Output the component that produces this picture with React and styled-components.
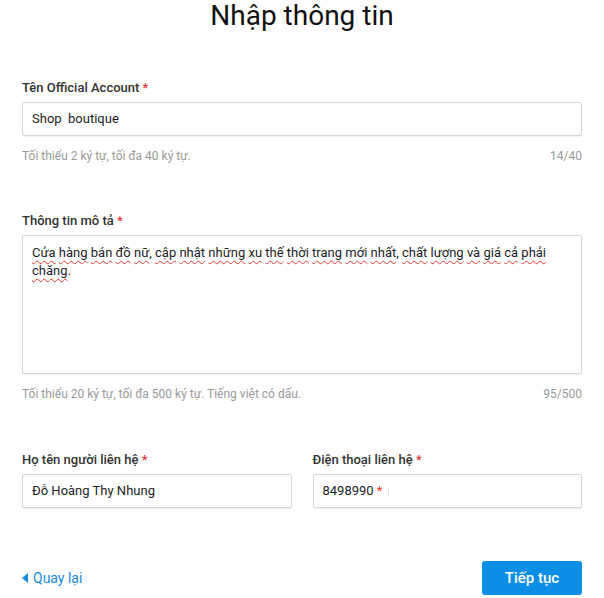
import React from 'react';
import styled, { createGlobalStyle } from 'styled-components';

const GlobalStyle = createGlobalStyle`
  body {
    margin: 0;
    background: #fff;
    font-family: Roboto, "Noto Sans", Arial, sans-serif;
    color: #222;
  }
`;

const Page = styled.div`
  width: 604px;
  padding: 0 22px;
  box-sizing: border-box;
`;

const Title = styled.h1`
  margin: 0;
  font-size: 28px;
  font-weight: 400;
  line-height: 32px;
  text-align: center;
  color: #111;
`;

const Section = styled.div`
  margin-top: ${(p) => p.top}px;
`;

const Label = styled.div`
  font-size: 13px;
  font-weight: 500;
  line-height: 16px;
  color: #333;
  margin-bottom: 6px;

  span {
    color: #e53935;
  }
`;

const Box = styled.div`
  box-sizing: border-box;
  height: ${(p) => p.height || 34}px;
  border: 1px solid #d6d6d6;
  border-radius: 2px;
  box-shadow: 0 1px 1px rgba(0, 0, 0, 0.06);
  padding: ${(p) => (p.multi ? '8px 9px' : '0 9px')};
  display: ${(p) => (p.multi ? 'block' : 'flex')};
  align-items: center;
  font-size: 13px;
  line-height: 18px;
  color: #1e1e1e;
`;

const Hint = styled.div`
  display: flex;
  justify-content: space-between;
  margin-top: 12px;
  font-size: 12px;
  line-height: 16px;
  color: #9a9a9a;
`;

const Row = styled.div`
  display: grid;
  grid-template-columns: 1fr 1fr;
  column-gap: 21px;
`;

const Typo = styled.span`
  text-decoration: underline wavy #e53935;
  text-decoration-thickness: 1px;
  text-underline-offset: 3px;
`;

const Star = styled.span`
  color: #e53935;
  margin-left: 3px;
`;

const Caret = styled.span`
  display: inline-block;
  width: 1px;
  height: 9px;
  background: #e2e2e2;
  margin-left: 6px;
`;

const Footer = styled.div`
  display: flex;
  justify-content: space-between;
  align-items: center;
  margin-top: 53px;
`;

const Back = styled.a`
  display: flex;
  align-items: center;
  gap: 5px;
  font-size: 14px;
  color: #1a8ae0;
  text-decoration: none;
  cursor: pointer;
`;

const Arrow = styled.span`
  width: 0;
  height: 0;
  border-top: 5px solid transparent;
  border-bottom: 5px solid transparent;
  border-right: 6px solid #1a8ae0;
`;

const Button = styled.button`
  width: 100px;
  height: 34px;
  border: none;
  border-radius: 3px;
  background: #0a8ee6;
  color: #fff;
  font-family: inherit;
  font-size: 15px;
  font-weight: 500;
  cursor: pointer;
`;

const desc =
  'Cửa hàng bán đồ nữ, cập nhật những xu thế thời trang mới nhất, chất lượng và giá cả phải chăng.';

const Described = () => (
  <>
    {desc.split(' ').map((w, i) => {
      const m = w.match(/^(.*?)([,.]?)$/);
      return (
        <React.Fragment key={i}>
          {i > 0 && ' '}
          <Typo>{m[1]}</Typo>
          {m[2]}
        </React.Fragment>
      );
    })}
  </>
);

const App = () => (
  <Page>
    <GlobalStyle />
    <Title>Nhập thông tin</Title>

    <Section top={48}>
      <Label>
        Tên Official Account <span>*</span>
      </Label>
      <Box>Shop&nbsp; boutique</Box>
      <Hint>
        <span>Tối thiểu 2 ký tự, tối đa 40 ký tự.</span>
        <span>14/40</span>
      </Hint>
    </Section>

    <Section top={49}>
      <Label>
        Thông tin mô tả <span>*</span>
      </Label>
      <Box multi height={139}>
        <Described />
      </Box>
      <Hint>
        <span>Tối thiểu 20 ký tự, tối đa 500 ký tự. Tiếng việt có dấu.</span>
        <span>95/500</span>
      </Hint>
    </Section>

    <Section top={50}>
      <Row>
        <div>
          <Label>
            Họ tên người liên hệ <span>*</span>
          </Label>
          <Box>Đỗ Hoàng Thy Nhung</Box>
        </div>
        <div>
          <Label>
            Điện thoại liên hệ <span>*</span>
          </Label>
          <Box>
            8498990<Star>*</Star>
            <Caret />
          </Box>
        </div>
      </Row>
    </Section>

    <Footer>
      <Back>
        <Arrow />
        Quay lại
      </Back>
      <Button>Tiếp tục</Button>
    </Footer>
  </Page>
);

export default App;
